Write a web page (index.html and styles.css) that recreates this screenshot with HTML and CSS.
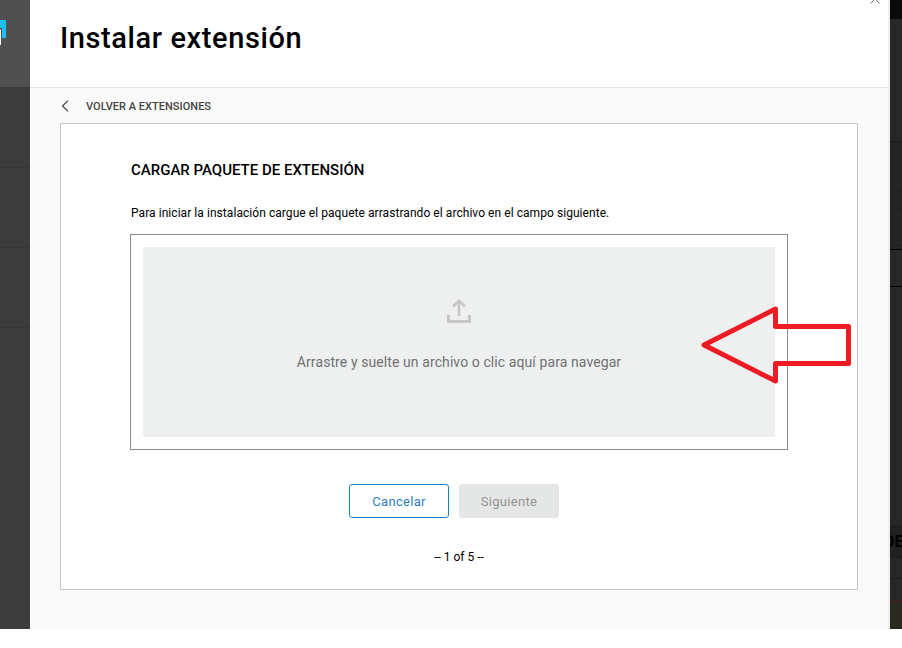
FILE: index.html
```html
<!DOCTYPE html>
<html lang="es">
<head>
<meta charset="utf-8">
<title>Instalar extensión</title>
<link rel="stylesheet" href="styles.css">
</head>
<body>
<div class="app">
  <aside class="rail">
    <div class="rail-head"><svg class="logo" width="6" height="28" viewBox="0 0 6 28"><path d="M0 0H6V18H2V8H0Z" fill="#1dc0f2"/><path d="M0 9L1 10V25H0Z" fill="#fff"/></svg></div>
    <div class="rail-item"></div>
    <div class="rail-item"></div>
    <div class="rail-item"></div>
  </aside>
  <section class="dialog">
    <header class="dialog-head">
      <h1>Instalar extensión</h1>
      <svg class="close" width="10" height="10" viewBox="0 0 10 10"><path d="M.5 .5L9.500 9.500M9.500 .5L.5 9.500" stroke="#777" fill="none"/></svg>
    </header>
    <div class="dialog-body">
      <a class="back"><svg width="8" height="12" viewBox="0 0 8 12"><path d="M7 .6L1.500 6L7 11.400" stroke="#444" stroke-width="1.200" fill="none"/></svg><span>VOLVER A EXTENSIONES</span></a>
      <div class="card">
        <h2><span>CARGAR PAQUETE DE EXTENSIÓN</span></h2>
        <p class="intro"><span>Para iniciar la instalación cargue el paquete arrastrando el archivo en el campo siguiente.</span></p>
        <div class="drop-frame">
          <div class="drop">
            <svg width="24" height="24" viewBox="0 0 24 24" fill="none" stroke="#c6c6c6" stroke-width="3"><path d="M1.500 16V22.500H22.500V16"/><path d="M12 17V2M6 7.500L12 1.800L18 7.500" stroke-width="2.600"/></svg>
            <span class="drop-text">Arrastre y suelte un archivo o clic aquí para navegar</span>
          </div>
        </div>
        <div class="actions">
          <button class="btn cancel">Cancelar</button>
          <button class="btn next" disabled>Siguiente</button>
        </div>
        <div class="steps">-- 1 of 5 --</div>
      </div>
    </div>
  </section>
  <aside class="behind">
    <div class="b-top"></div>
    <div class="b-a"></div>
    <div class="b-b"><i></i><i></i><i></i><i></i><i></i></div>
    <div class="b-c"></div>
    <div class="b-d"></div>
    <div class="b-head"><span>DE</span></div>
    <div class="b-e"></div>
    <div class="b-f"></div>
    <div class="b-olive"></div>
  </aside>
  <svg class="arrow" width="160" height="84" viewBox="0 0 160 84"><path d="M4 45L75.500 9V26.500H148.500V63.500H75.500V81Z" fill="none" stroke="#ed1c24" stroke-width="5" stroke-linejoin="round"/></svg>
</div>
</body>
</html>
```
FILE: styles.css
```css
* { box-sizing: border-box; }
body { margin: 0; background: #fff; font-family: Roboto, "Liberation Sans", sans-serif; color: #000; overflow: hidden; }
h1, h2, p { margin: 0; }
svg { display: block; flex: none; }
.app { position: relative; display: grid; grid-template-columns: 30px 860px 12px; width: 902px; height: 629px; overflow: hidden; }
.rail { background: #3c3c3c; }
.rail-head { height: 88px; background: #505050; border-bottom: 1px solid #3a3a3a; padding-top: 20px; }
.rail-item { height: 80px; border-bottom: 1px solid #363636; }
.dialog { background: #fafafa; display: flex; flex-direction: column; border-right: 2px solid #f0f0f0; }
.dialog-head { position: relative; height: 88px; flex: none; background: #fff; border-bottom: 1px solid #e5e5e5; padding: 19px 0 0 30px; }
h1 { font-size: 29px; line-height: 38px; font-weight: 500; letter-spacing: .6px; white-space: nowrap; }
.close { position: absolute; left: 840px; top: -6px; }
.dialog-body { padding: 0 30px; width: 858px; }
.back { display: flex; align-items: center; gap: 17px; height: 35px; padding: 1px 0 0 1px; font-size: 11px; font-weight: 500; letter-spacing: .03px; color: #444; }
.card { width: 798px; height: 467px; background: #fff; border: 1px solid #c6c6c6; padding: 0 69px; }
h2 { margin-top: 36px; padding-left: 1px; font-size: 15px; line-height: 20px; font-weight: 500; white-space: nowrap; }
.intro { margin-top: 24px; padding-left: 1px; font-size: 12px; line-height: 18px; letter-spacing: .058px; white-space: nowrap; }
.drop-frame { margin-top: 12px; height: 216px; border: 1px solid #8d8d8d; padding: 12px; }
.drop { height: 190px; background: #eef0f0; display: flex; flex-direction: column; align-items: center; padding-top: 52px; }
.drop-text { margin-top: 29px; font-size: 14px; line-height: 20px; letter-spacing: .09px; color: #717171; white-space: nowrap; }
.actions { display: flex; gap: 10px; margin: 34px 0 0 219px; }
.btn { width: 100px; height: 34px; border-radius: 3px; font: 400 13px/20px Roboto, sans-serif; letter-spacing: .3px; padding: 1px 0 0; }
.cancel { background: #fff; border: 1px solid #1c84c6; color: #2b7fbd; }
.next { background: #e5e7e6; border: 0; color: #929292; }
.steps { margin-top: 29px; text-align: center; font-size: 12px; line-height: 20px; }
.behind { background: #272727; overflow: hidden; }
.b-top { height: 19px; background: #090909; }
.b-a { height: 123px; border-bottom: 1px solid #1b1b1b; }
.b-b { height: 108px; border-bottom: 1px solid #000; padding-top: 29px; display: flex; flex-direction: column; justify-content: space-between; padding-bottom: 3px; background: #242424; }
.b-b i { border-top: 1px dashed #1e1e1e; }
.b-c { height: 37px; border-bottom: 1px solid #000; }
.b-d { height: 238px; }
.b-head { height: 34px; background: #202020; overflow: hidden; }
.b-head span { display: block; margin-left: -6px; font-size: 16px; line-height: 33px; font-weight: 700; }
.b-e { height: 20px; border-bottom: 1px dashed #1c1c1c; }
.b-f { height: 23px; border-bottom: 1px dashed #5a1518; }
.b-olive { height: 27px; background: #29291f; }
.arrow { position: absolute; left: 700px; top: 300px; }
```
